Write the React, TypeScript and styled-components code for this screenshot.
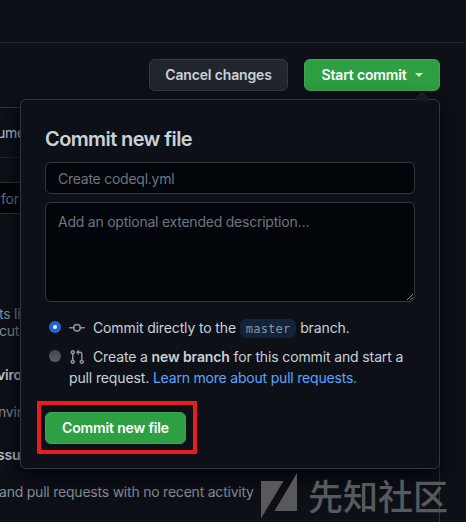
import React from "react";
import styled, { createGlobalStyle } from "styled-components";

const GlobalStyle = createGlobalStyle`
  *, *::before, *::after { box-sizing: border-box; }
  html, body { margin: 0; background: #0d1117; overflow: hidden; }
  body { font: 400 14px/21px Inter, "Liberation Sans", sans-serif; color: #c9d1d9; }
  b { font-weight: 600; }
`;

const Page = styled.div`
  position: relative;
  display: flex;
  flex-direction: column;
  width: 466px;
  height: 522px;
  overflow: hidden;
  background: #0d1117;
`;

const TopBar = styled.header`
  flex: none;
  height: 43px;
  border-bottom: 1px solid #21262d;
`;

const Toolbar = styled.div`
  flex: none;
  display: flex;
  justify-content: flex-end;
  gap: 16px;
  height: 64px;
  padding: 16px 26px 0 0;
`;

const Button = styled.button<{ $primary?: boolean; $width: number }>`
  display: flex;
  align-items: center;
  justify-content: center;
  gap: 8px;
  width: ${(p) => p.$width}px;
  height: 32px;
  padding: 0;
  border: 1px solid ${(p) => (p.$primary ? "#3fa652" : "#363b42")};
  border-radius: 6px;
  background: ${(p) => (p.$primary ? "#2ea043" : "#21262d")};
  color: ${(p) => (p.$primary ? "#ffffff" : "#c9d1d9")};
  font: 600 14px/20px Inter, sans-serif;
  letter-spacing: -0.16px;
  white-space: nowrap;
`;

const Caret = styled.span`
  border: 4px solid transparent;
  border-top-color: #d9f0dd;
  border-bottom: 0;
`;

const HelpPanel = styled.aside`
  flex: 1;
  width: 440px;
  border: 1px solid #30363d;
  border-width: 1px 1px 0 0;
  letter-spacing: -0.22px;
`;

const PanelTabs = styled.div`
  display: flex;
  align-items: center;
  height: 50px;
  border-bottom: 1px solid #21262d;
  text-indent: -3px;
`;

const SearchBox = styled.div`
  height: 32px;
  margin-top: 24px;
  padding: 5px 0 0 1px;
  border: 1px solid #30363d;
  border-left: 0;
  background: #010409;
  color: #6e7681;
`;

const PanelText = styled.p<{ $top: number; $shift?: number; $strong?: boolean; $lead?: number }>`
  margin: ${(p) => p.$top}px 0 0 ${(p) => p.$shift ?? 0}px;
  color: ${(p) => (p.$strong ? "#c9d1d9" : "#8b949e")};
  font-weight: ${(p) => (p.$strong ? 600 : 400)};
  line-height: ${(p) => p.$lead ?? 20}px;
  white-space: nowrap;
`;

const Popover = styled.form`
  position: absolute;
  top: 99px;
  left: 20px;
  width: 420px;
  height: 370px;
  padding: 24px;
  border: 1px solid #30363d;
  border-radius: 6px;
  background: #0d1117;
  box-shadow: 0 8px 24px #010409;
`;

const Pointer = styled.svg`
  position: absolute;
  top: -8px;
  right: 9px;
`;

const Title = styled.h3`
  margin: 3px 0 11px;
  font-size: 20px;
  font-weight: 600;
  line-height: 24px;
  letter-spacing: -0.6px;
`;

const Field = styled.input`
  display: block;
  width: 370px;
  height: 32px;
  padding: 5px 12px;
  border: 1px solid #30363d;
  border-radius: 6px;
  background: #010409;
  font: 400 14px/20px Inter, sans-serif;
  letter-spacing: -0.25px;
  &::placeholder { color: #6e7681; opacity: 1; }
`;

const Description = styled.div`
  position: relative;
  width: 370px;
  height: 100px;
  margin-top: 8px;
  padding: 9px 12px;
  border: 1px solid #30363d;
  border-radius: 6px;
  background: #010409;
  color: #6e7681;
  line-height: 20px;
  letter-spacing: -0.23px;
`;

const Grip = styled.svg`
  position: absolute;
  right: 0;
  bottom: 0;
`;

const Choice = styled.label<{ $top: number; $height: number }>`
  display: grid;
  grid-template-columns: 12px 1fr;
  column-gap: 8px;
  height: ${(p) => p.$height}px;
  margin: ${(p) => p.$top}px 0 0 4px;
  letter-spacing: -0.13px;
  white-space: nowrap;
`;

const Radio = styled.span<{ $checked?: boolean }>`
  display: grid;
  place-items: center;
  width: 12px;
  height: 12px;
  margin-top: 4px;
  border-radius: 50%;
  background: ${(p) => (p.$checked ? "#2463d6" : "linear-gradient(#43464b, #5b5e63)")};
  &::after {
    content: "";
    width: 4px;
    height: 4px;
    border-radius: 50%;
    background: ${(p) => (p.$checked ? "#e6f2fa" : "transparent")};
  }
`;

const Octicon = styled.svg`
  width: 16px;
  height: 16px;
  margin-right: 8px;
  fill: #8b949e;
  vertical-align: -3px;
`;

const Branch = styled.code`
  display: inline-block;
  height: 19px;
  padding: 0 6px;
  border-radius: 6px;
  background: #13233a;
  color: #8b949e;
  font: 400 12px/20px "DejaVu Sans Mono", "Liberation Mono", monospace;
  letter-spacing: 0.2px;
`;

const Link = styled.a`
  color: #58a6ff;
  letter-spacing: -0.2px;
`;

const SubmitRow = styled.div`
  margin-top: 24px;
`;

const Highlight = styled.div`
  position: absolute;
  top: 401px;
  left: 37px;
  width: 160px;
  height: 53px;
  border: 4px solid #e81e1e;
  border-radius: 1px;
`;

const Watermark = styled.div`
  position: absolute;
  top: 473px;
  left: 261px;
  display: flex;
  height: 46px;
  gap: 11px;
  color: #58595d;
  font: 500 35px/44px "Noto Sans CJK SC", sans-serif;
  white-space: nowrap;
`;

const PULL_REQUEST_PATH =
  "M7.177 3.073L9.573.677A.25.25 0 0 1 10 .854v4.792a.25.25 0 0 1-.427.177L7.177 3.427a.25.25 0 0 1 0-.354zM3.75 2.5a.75.75 0 1 0 0 1.5.75.75 0 0 0 0-1.5zm-2.25.75a2.25 2.25 0 1 1 3 2.122v5.256a2.251 2.251 0 1 1-1.5 0V5.372A2.25 2.25 0 0 1 1.5 3.25zM11 2.5h-1V4h1a1 1 0 0 1 1 1v5.628a2.251 2.251 0 1 0 1.5 0V5A2.5 2.5 0 0 0 11 2.5zm1 10.25a.75.75 0 1 1 1.5 0 .75.75 0 0 1-1.5 0zM3.75 12a.75.75 0 1 0 0 1.5.75.75 0 0 0 0-1.5z";

export default function App() {
  return (
    <Page>
      <GlobalStyle />
      <TopBar />
      <Toolbar>
        <Button $width={139}>Cancel changes</Button>
        <Button $primary $width={136}>
          Start commit
          <Caret />
        </Button>
      </Toolbar>

      <HelpPanel>
        <PanelTabs>ume</PanelTabs>
        <SearchBox>for</SearchBox>
        <PanelText $top={91} $lead={17} $shift={-1}>ts li<br />cuti</PanelText>
        <PanelText $top={26} $shift={-3} $strong>viro</PanelText>
        <PanelText $top={17} $shift={-2}>nvir</PanelText>
        <PanelText $top={23} $shift={-3} $strong>ssue</PanelText>
        <PanelText $top={17} $shift={-1}>and pull requests with no recent activity</PanelText>
      </HelpPanel>

      <Popover>
        <Pointer width="16" height="9" viewBox="0 0 16 9">
          <path d="M1 8.5 8 1.5 15 8.5V9H1z" fill="#161b22" />
          <path d="M.5 8 8 1 15.5 8" fill="none" stroke="#272d34" />
        </Pointer>
        <Title>Commit new file</Title>
        <Field placeholder="Create codeql.yml" />
        <Description>
          Add an optional extended description…
          <Grip width="8" height="8" viewBox="0 0 8 8" stroke="#b4b8bd" strokeWidth="0.8">
            <path d="M1 7 7 1M4.5 7 7 4.5" />
          </Grip>
        </Description>
        <Choice $top={15} $height={21}>
          <Radio $checked />
          <span>
            <Octicon viewBox="0 0 16 16">
              <g fill="none" stroke="#8b949e" strokeWidth="1.5" strokeLinecap="round">
                <circle cx="8" cy="7.75" r="3.25" />
                <path d="M.75 7.75h4M11.25 7.75h4" />
              </g>
            </Octicon>
            Commit directly to the <Branch>master</Branch> branch.
          </span>
        </Choice>
        <Choice $top={8} $height={42}>
          <Radio />
          <span>
            <Octicon viewBox="0 0 16 16"><path d={PULL_REQUEST_PATH} /></Octicon>
            Create a <b>new branch</b> for this commit and start a<br />
            pull request. <Link>Learn more about pull requests.</Link>
          </span>
        </Choice>
        <SubmitRow>
          <Button type="button" $primary $width={141}>Commit new file</Button>
        </SubmitRow>
      </Popover>

      <Highlight />
      <Watermark>
        <svg width="36" height="46" viewBox="0 0 36 46" fill="currentColor">
          <path d="M0 8H22.5L0 45.5zM36 0V38H13.5z" />
        </svg>
        先知社区
      </Watermark>
    </Page>
  );
}
